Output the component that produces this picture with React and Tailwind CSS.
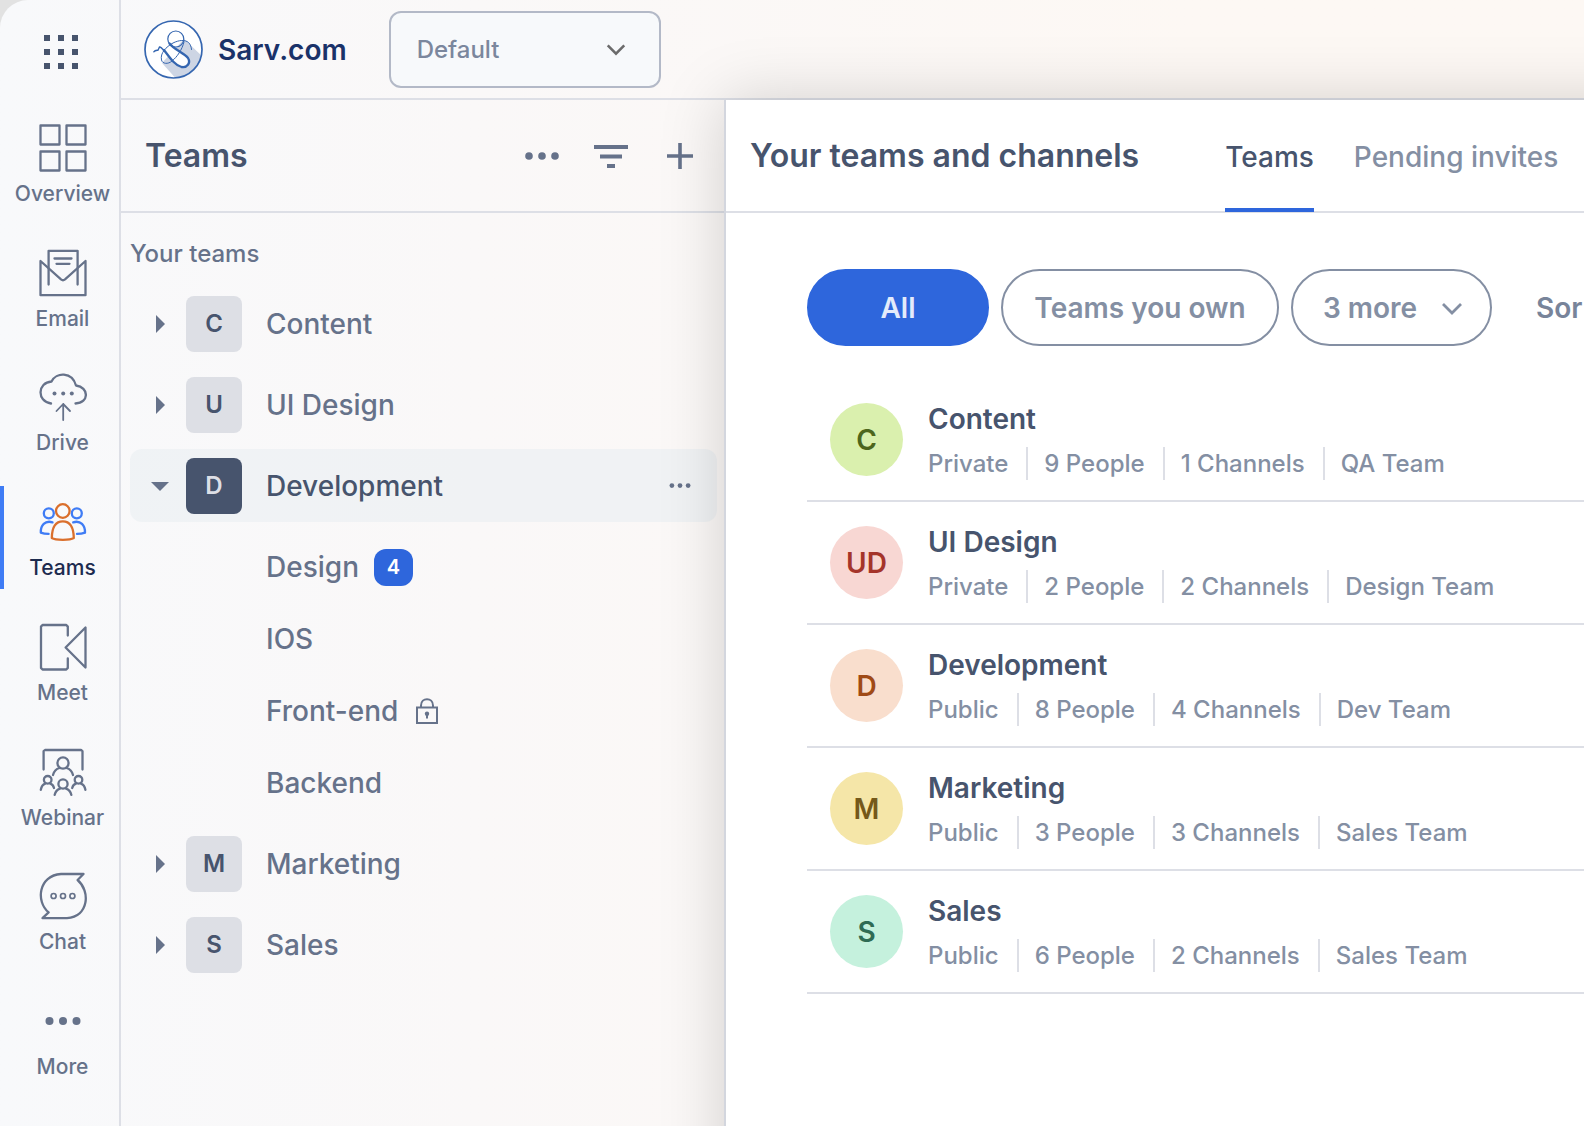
import { useState } from "react";
import clsx from "clsx";

const NAV_ITEMS = [
  { label: "Overview", icon: OverviewIcon },
  { label: "Email", icon: EmailIcon },
  { label: "Drive", icon: DriveIcon },
  { label: "Teams", icon: TeamsIcon },
  { label: "Meet", icon: MeetIcon },
  { label: "Webinar", icon: WebinarIcon },
  { label: "Chat", icon: ChatIcon },
  { label: "More", icon: MoreIcon },
];

const TEAMS = [
  {
    name: "Content",
    initials: "C",
    avatar: "bg-[#daf0ae] text-[#4d661c]",
    meta: ["Private", "9 People", "1 Channels", "QA Team"],
  },
  {
    name: "UI Design",
    initials: "UD",
    avatar: "bg-[#f8d7d3] text-[#a5342a]",
    meta: ["Private", "2 People", "2 Channels", "Design Team"],
  },
  {
    name: "Development",
    initials: "D",
    avatar: "bg-[#f9decd] text-[#a04a16]",
    meta: ["Public", "8 People", "4 Channels", "Dev Team"],
    channels: [
      { name: "Design", unread: 4 },
      { name: "IOS" },
      { name: "Front-end", locked: true },
      { name: "Backend" },
    ],
  },
  {
    name: "Marketing",
    initials: "M",
    avatar: "bg-[#f5e6a8] text-[#75591a]",
    meta: ["Public", "3 People", "3 Channels", "Sales Team"],
  },
  {
    name: "Sales",
    initials: "S",
    avatar: "bg-[#c5f1dd] text-[#2f6b54]",
    meta: ["Public", "6 People", "2 Channels", "Sales Team"],
  },
];

function NavSvg({ children }) {
  return (
    <svg
      viewBox="0 0 48 48"
      className="size-12"
      fill="none"
      stroke="currentColor"
      strokeWidth="2.3"
      strokeLinecap="round"
      strokeLinejoin="round"
      aria-hidden="true"
    >
      {children}
    </svg>
  );
}

function OverviewIcon() {
  return (
    <NavSvg>
      <rect x="1.5" y="1.5" width="19" height="19" />
      <rect x="27.5" y="1.5" width="19" height="19" />
      <rect x="1.5" y="27.5" width="19" height="19" />
      <rect x="27.5" y="27.5" width="19" height="19" />
    </NavSvg>
  );
}

function EmailIcon() {
  return (
    <NavSvg>
      <path d="M9.6 35.5V1.8H38.6V35.5" />
      <path d="M15.5 9.5h17M17.5 14.8h13" />
      <path d="M1.5 12V46.2H46.5V12L26 30.4Q24 32 22 30.4Z" />
    </NavSvg>
  );
}

function DriveIcon() {
  return (
    <NavSvg>
      <path d="M12 30.5C-2.5 28.5-1.5 9.5 12.5 8.5C17-1 33-1.5 37 12.5C50 14 50.5 30 36.5 30.5" />
      <path d="M24.2 47V31M17.5 38L24.2 31L31 38" strokeWidth="1.8" />
      <g fill="currentColor" stroke="none">
        <circle cx="15.5" cy="20.5" r="2" />
        <circle cx="24.2" cy="20.5" r="2" />
        <circle cx="32.8" cy="20.5" r="2" />
      </g>
    </NavSvg>
  );
}

function TeamsIcon() {
  return (
    <NavSvg>
      <g stroke="#3f7cf5">
        <circle cx="9.8" cy="15.3" r="5" />
        <circle cx="37.8" cy="15.3" r="5" />
        <path d="M13.5 24.3C6 22 1.5 27.5 1.8 34.6Q5 35.9 9.6 35.9" />
        <path d="M34.2 24.3C41.7 22 46.2 27.5 46 34.6Q42.6 35.9 38 35.9" />
      </g>
      <g stroke="#da6f2c">
        <circle cx="23.8" cy="13" r="6.8" />
        <path d="M12.8 40C13 29 16 23.4 23.8 23.4S34.6 29 34.8 40C31 42.4 16.6 42.4 12.8 40Z" />
      </g>
    </NavSvg>
  );
}

function MeetIcon() {
  return (
    <NavSvg>
      <path d="M28.8 12.5V3.6L27.3 2H3.5L2 3.6V44.9L3.5 46.5H27.3L28.8 44.9V35.5" />
      <path d="M26.6 24.5L46.5 4.5V44.5Z" />
    </NavSvg>
  );
}

function WebinarIcon() {
  return (
    <NavSvg>
      <path d="M4.6 21.5V3.2L6 2H42L43.5 3.2V21.5" />
      <circle cx="24" cy="15" r="5.6" />
      <path d="M14 27C15 23 17.5 20.8 20.5 20M34 27C33 23 30.5 20.8 27.5 20" />
      <circle cx="8.7" cy="31.8" r="3.8" />
      <circle cx="39.5" cy="31.8" r="3.8" />
      <circle cx="24" cy="36" r="4.6" />
      <path d="M1.8 41.8C2.4 38.4 4 36.4 6.2 35.6M15 40C14.4 37.6 13.2 36.2 11.3 35.6" />
      <path d="M46.4 41.8C45.8 38.4 44.2 36.4 42 35.6M33.2 40C33.8 37.6 35 36.2 36.9 35.6" />
      <path d="M15.7 46.8C16.4 43.6 18.4 41.4 21 40.6M32.3 46.8C31.6 43.6 29.6 41.4 27 40.6" />
    </NavSvg>
  );
}

function ChatIcon() {
  return (
    <NavSvg>
      <path d="M22 2H44.5L38.6 8C51.5 19 50 44.5 28 46.2H3.5L9.6 40.4C-3.5 29.5-0.5 3.5 22 2Z" />
      <g strokeWidth="1.7">
        <circle cx="14.6" cy="24" r="2.5" />
        <circle cx="24" cy="24" r="2.5" />
        <circle cx="33.4" cy="24" r="2.5" />
      </g>
    </NavSvg>
  );
}

function MoreIcon() {
  return (
    <NavSvg>
      <g fill="currentColor" stroke="none">
        <circle cx="10.5" cy="24" r="4" />
        <circle cx="24" cy="24" r="4" />
        <circle cx="37.5" cy="24" r="4" />
      </g>
    </NavSvg>
  );
}

function Logo() {
  return (
    <svg viewBox="0 0 60 60" className="size-[60px]" fill="none" stroke="#3566b0" strokeLinecap="round" aria-hidden="true">
      <circle cx="29.5" cy="29.5" r="28.7" fill="#fff" stroke="none" />
      <path d="M40 19L57.4 35.4A28.5 28.5 0 0 1 31 57.6L18 43Z" fill="#cdd5e4" stroke="none" />
      <circle cx="29.5" cy="29.5" r="28.5" strokeWidth="1.7" />
      {/* capsule in the middle of the knot */}
      <path d="M27 25C31 29.5 40 33 44 38C47 43 43 48 37.5 47C31 45.5 27 39 22.5 31.5Z" fill="#fff" stroke="none" />
      <circle cx="31.8" cy="19" r="8" strokeWidth="1.2" />
      <path d="M40 22C38 30 33 37 28 41C24 44.5 18.5 44 17.5 40C16 33 22 27 29 23C35 20 41 19.5 44.5 22.5C46.5 24.5 47.3 27 47.5 29.5" strokeWidth="1" />
      <path d="M9.8 31.8C11 30.2 12 30.4 14 30.2L15.5 27C17 27 18 28 20 31" strokeWidth="1.4" />
      <path d="M25.5 23.5C30 29.5 40 33 44 38C47 43 43 48 37.5 47C31 45.5 26 38 20 30" strokeWidth="2.3" />
    </svg>
  );
}

function Chevron({ className }) {
  return (
    <svg viewBox="0 0 24 24" className={className} fill="none" stroke="currentColor" strokeWidth="2.8" aria-hidden="true">
      <path d="M3 8L12 17L21 8" />
    </svg>
  );
}

function Dots({ className }) {
  return (
    <svg viewBox="0 0 34 8" className={className} fill="currentColor" aria-hidden="true">
      <circle cx="4" cy="4" r="3.8" />
      <circle cx="17" cy="4" r="3.8" />
      <circle cx="30" cy="4" r="3.8" />
    </svg>
  );
}

function NavRail() {
  return (
    <aside className="flex w-[119px] shrink-0 flex-col pb-[38px]">
      <button className="flex h-[112px] items-start pt-[35px] pl-11" aria-label="All apps">
        <svg viewBox="0 0 34 34" className="size-[34px] text-[#47546d]" fill="currentColor" aria-hidden="true">
          {[0, 14, 28].map((y) => [0, 14, 28].map((x) => <rect key={`${x}-${y}`} x={x} y={y} width="6" height="6" />))}
        </svg>
      </button>
      <nav className="flex flex-1 flex-col justify-between">
        {NAV_ITEMS.map(({ label, icon: Icon }) => {
          const active = label === "Teams";
          return (
            <a
              key={label}
              href="#"
              aria-current={active ? "page" : undefined}
              className={clsx(
                "relative flex h-[103px] flex-col items-center pt-3 pl-[6px] text-[21px] leading-7 font-medium",
                active ? "text-[#1d2b4f]" : "text-[#66728a]"
              )}
            >
              {active && <span className="absolute inset-y-0 left-0 w-1 bg-[#3f7cf5]" />}
              <Icon />
              <span className="mt-2">{label}</span>
            </a>
          );
        })}
      </nav>
    </aside>
  );
}

function TopBar() {
  return (
    <header className="flex h-[100px] items-center border-b-2 border-[#dddfe6] pt-px pl-[23px]">
      <Logo />
      <span className="ml-[14px] text-[28px] font-semibold text-[#1a3269]">Sarv.com</span>
      <div className="relative ml-[42px]">
        <select
          aria-label="Workspace"
          className="h-[77px] w-[272px] appearance-none rounded-xl border-2 border-[#b3b9c7] bg-[#f7f9fb] px-[26px] text-2xl font-medium text-[#7b879d]"
        >
          <option>Default</option>
        </select>
        <Chevron className="pointer-events-none absolute top-[27px] right-[34px] size-[22px] text-[#6b6b6b]" />
      </div>
    </header>
  );
}

function TeamRow({ team }) {
  const open = Boolean(team.channels);
  return (
    <li>
      <div className={clsx("flex h-[73px] items-center rounded-xl pr-[26px] pl-[20px]", open && "bg-[#e9eef2]/60")}>
        <button className="flex flex-1 items-center text-left" aria-expanded={open}>
          <svg viewBox="0 0 20 20" className={clsx("size-5 text-[#66728a]", open && "rotate-90")} fill="currentColor" aria-hidden="true">
            <path d="M6 1L15 10L6 19Z" />
          </svg>
          <span
            className={clsx(
              "ml-4 flex size-14 items-center justify-center rounded-lg text-2xl font-semibold",
              open ? "bg-[#47546d] text-[#dddfe6]" : "bg-[#dddfe5] text-[#47546d]"
            )}
          >
            {team.initials[0]}
          </span>
          <span className={clsx("ml-6 text-[28px] font-medium", open ? "text-[#47546d]" : "text-[#66728a]")}>{team.name}</span>
        </button>
        {open && (
          <button aria-label="Team options" className="text-[#66728a]">
            <Dots className="h-[5px] w-[22px]" />
          </button>
        )}
      </div>
      {open && (
        <ul className="pt-[9px]">
          {team.channels.map((channel) => (
            <li key={channel.name}>
              <a href="#" className="flex h-[72px] items-center pl-[136px] text-[28px] font-medium text-[#66728a]">
                {channel.name}
                {channel.unread && (
                  <span className="ml-[15px] flex h-[37px] w-[39px] items-center justify-center rounded-xl bg-[#2e66dc] text-xl font-semibold text-white">
                    {channel.unread}
                  </span>
                )}
                {channel.locked && <LockIcon />}
              </a>
            </li>
          ))}
        </ul>
      )}
    </li>
  );
}

function LockIcon() {
  return (
    <svg viewBox="0 0 22 26" className="ml-[18px] h-[26px] w-[22px]" fill="none" stroke="currentColor" strokeWidth="2" aria-hidden="true">
      <rect x="1" y="9.5" width="20" height="15.5" />
      <path d="M5 9.5V7.5C5 -1 17 -1 17 7.5V9.5" />
      <circle cx="11" cy="15.8" r="2.2" fill="currentColor" stroke="none" />
      <path d="M11 16V20.5" />
    </svg>
  );
}

function Sidebar() {
  return (
    <section className="flex w-[603px] shrink-0 flex-col">
      <div className="flex h-[113px] items-center border-b-2 border-[#dddfe6] pt-px pr-[27px] pl-6">
        <h2 className="flex-1 text-[32px] font-semibold text-[#47546d]">Teams</h2>
        <div className="flex items-center gap-[35px] text-[#66728a]">
          <button aria-label="Options">
            <Dots className="h-2 w-[34px]" />
          </button>
          <button aria-label="Filter">
            <svg viewBox="0 0 34 23" className="h-[23px] w-[34px]" fill="currentColor" aria-hidden="true">
              <path d="M0 0h34v4H0zM6 9.5h22v4H6zM13 19h8v4h-8z" />
            </svg>
          </button>
          <button aria-label="Add team" className="flex w-[34px] justify-center">
            <svg viewBox="0 0 28 28" className="size-7" stroke="currentColor" strokeWidth="3.6" aria-hidden="true">
              <path d="M14 1V27M1 14H27" />
            </svg>
          </button>
        </div>
      </div>
      <div className="pt-[25px] pr-[7px] pl-[9px]">
        <h3 className="h-[49px] text-2xl font-medium text-[#66728a]">Your teams</h3>
        <ul className="flex flex-col gap-2">
          {TEAMS.map((team) => (
            <TeamRow key={team.name} team={team} />
          ))}
        </ul>
      </div>
    </section>
  );
}

function FilterBar() {
  const pill = "flex h-[77px] shrink-0 items-center justify-center rounded-full border-2 text-[28px] font-semibold";
  return (
    <div className="flex items-center gap-3">
      <button className={clsx(pill, "w-[182px] border-[#2e66dc] bg-[#2e66dc] text-[#e3ebfb]")}>All</button>
      <button className={clsx(pill, "w-[278px] border-[#848fa3] text-[#848fa3]")}>Teams you own</button>
      <button className={clsx(pill, "w-[201px] gap-[23px] border-[#848fa3] pl-1 text-[#848fa3]")}>
        3 more
        <Chevron className="size-6" />
      </button>
      <span className="ml-8 shrink-0 text-[28px] font-semibold text-[#78849a]">Sor</span>
    </div>
  );
}

function TeamsPanel() {
  const [tab, setTab] = useState("Teams");

  // the panel runs past the right and bottom edges so its shadow stays even there
  return (
    <main className="relative z-10 -mr-20 -mb-20 min-w-0 flex-1 border-l-2 border-[#d3d6de] bg-white shadow-[0_0_60px_rgba(0,0,0,0.17)]">
      <div className="flex h-[113px] items-center border-b-2 border-[#dddfe6] pl-6">
        <h1 className="shrink-0 text-[32px] font-semibold text-[#47546d]">Your teams and channels</h1>
        <div className="ml-[86px] flex h-[113px] gap-10">
          {["Teams", "Pending invites"].map((name) => (
            <button
              key={name}
              onClick={() => setTab(name)}
              className={clsx(
                "shrink-0 border-b-4 pt-[6px] text-[28px] font-medium",
                tab === name ? "border-[#2e66dc] text-[#47546d]" : "border-transparent text-[#848fa3]"
              )}
            >
              {name}
            </button>
          ))}
        </div>
      </div>
      <div className="pt-14 pl-[81px]">
        <FilterBar />
        <ul className="mt-[33px]">
          {TEAMS.map((team) => (
            <li key={team.name} className="flex h-[123px] items-center border-b-2 border-[#dddfe6] pl-[23px]">
              <span className={clsx("flex size-[73px] items-center justify-center rounded-full text-[28px] font-semibold", team.avatar)}>
                {team.initials}
              </span>
              <div className="ml-[25px]">
                <h4 className="text-[28px] leading-10 font-semibold text-[#47546d]">{team.name}</h4>
                <p className="mt-2 flex items-center text-2xl leading-[33px] font-medium whitespace-nowrap text-[#848fa3]">
                  {team.meta.map((item, i) => (
                    <span key={item} className={clsx(i > 0 && "ml-[18px] border-l-2 border-[#dddfe6] pl-4")}>
                      {item}
                    </span>
                  ))}
                </p>
              </div>
            </li>
          ))}
        </ul>
      </div>
    </main>
  );
}

export default function App() {
  return (
    <div className="min-h-screen overflow-hidden bg-[#e2e2e2] font-['Inter',sans-serif]">
      <div className="flex min-h-screen rounded-tl-[28px] bg-linear-to-r from-[#f8f9fb] via-[#faf8f8] via-30% to-[#fdf8f4] to-75%">
        <NavRail />
        <div className="flex min-w-0 flex-1 flex-col overflow-hidden border-l-2 border-[#dddfe6]">
          <TopBar />
          <div className="flex flex-1">
            <Sidebar />
            <TeamsPanel />
          </div>
        </div>
      </div>
    </div>
  );
}
